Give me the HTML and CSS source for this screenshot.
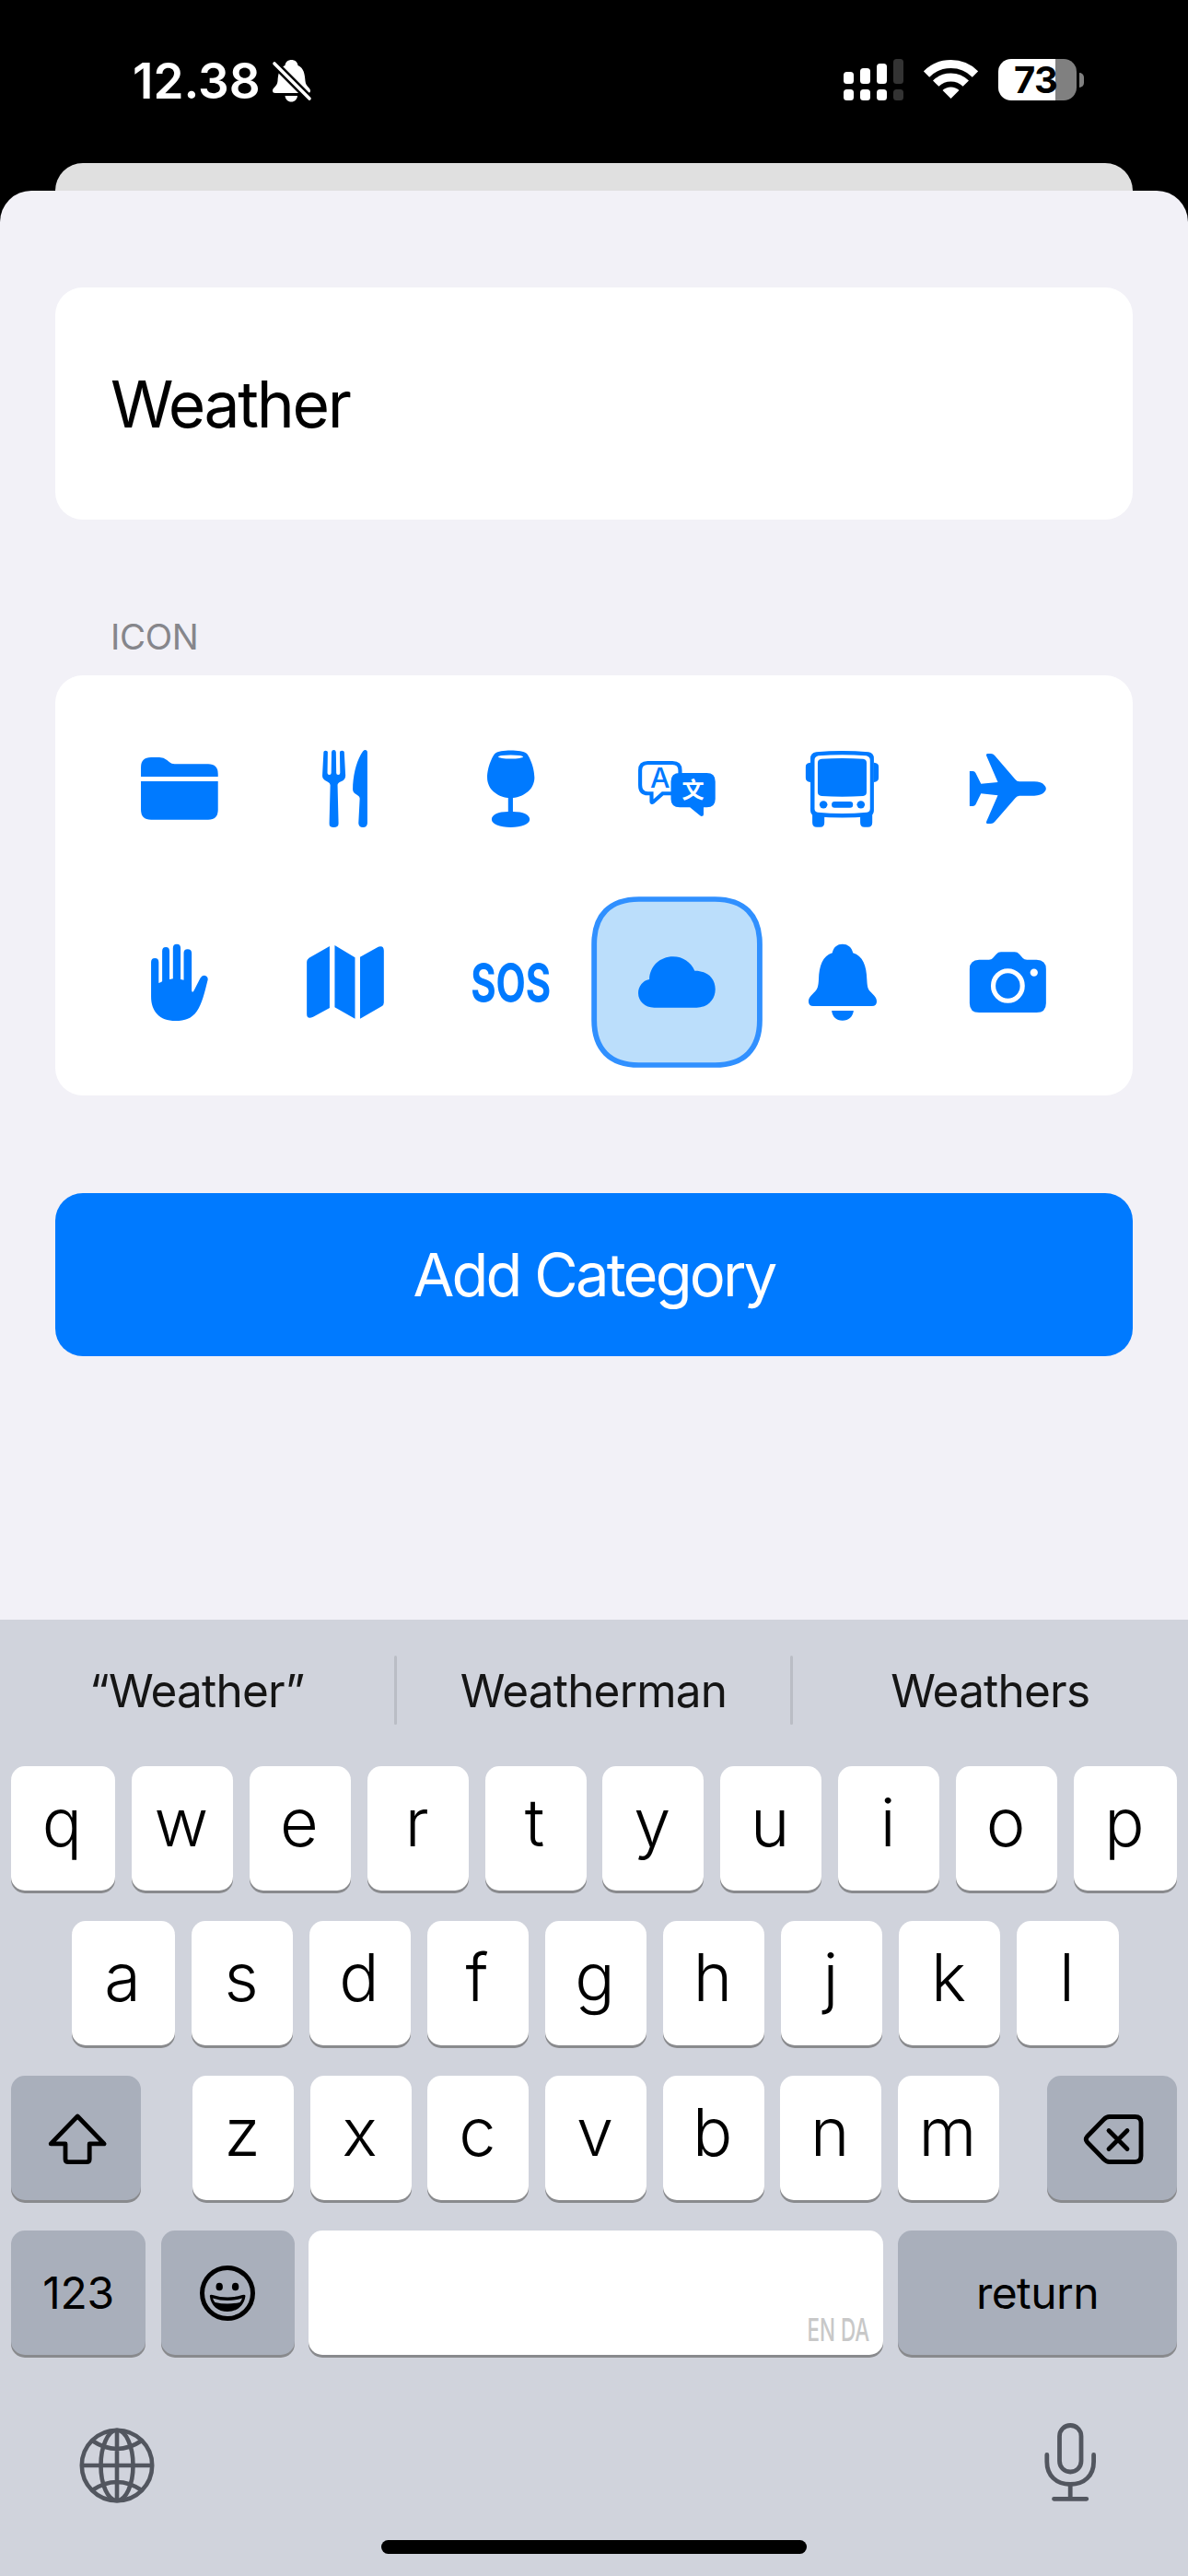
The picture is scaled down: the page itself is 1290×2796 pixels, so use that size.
FILE: index.html
```html
<!DOCTYPE html>
<html lang="en">
<head>
<meta charset="utf-8">
<title>Add Category</title>
<link rel="stylesheet" href="styles.css">
</head>
<body>
<div class="screen">
  <header class="status">
    <div class="status-left">
      <span class="clock">12.38</span>
      <svg class="mute" viewBox="294 62 46 50">
        <g fill="#fff"><path d="M309.500 71C310 67 313 65 316.500 65S323 67 323.500 71C330 73.500 331 81 331.500 88C332 94 337 95 337 98.500Q337 101 334 101H299Q296 101 296 98.500C296 95 301 94 301.500 88C302 81 303 73.500 309.500 71Z"/><path d="M309.500 104H323C322.500 108 320 110.500 316.300 110.500S310 108 309.500 104Z"/></g>
        <path d="M298 69L336 107" stroke="#000" stroke-width="8.500"/>
        <path d="M298 69L336 107" stroke="#fff" stroke-width="3.600" stroke-linecap="round"/>
      </svg>
    </div>
    <div class="status-right">
      <svg class="signal" viewBox="916 64 65 45">
        <g fill="#fff"><rect x="916" y="78" width="11" height="13" rx="3.500"/><rect x="934" y="74" width="11" height="17" rx="3.500"/><rect x="952" y="69" width="11" height="22" rx="3.500"/><rect x="916" y="97" width="11" height="12" rx="3.500"/><rect x="934" y="97" width="11" height="12" rx="3.500"/><rect x="952" y="97" width="11" height="12" rx="3.500"/></g>
        <g fill="#333"><rect x="970" y="64" width="11" height="27" rx="3.500"/><rect x="970" y="97" width="11" height="12" rx="3.500"/></g>
      </svg>
      <svg class="wifi" viewBox="1003 64 59 45">
        <g fill="none" stroke="#fff" stroke-width="9"><path d="M1006 80.500A37.500 37.500 0 0 1 1059 80.500"/><path d="M1016.200 90.700A23 23 0 0 1 1048.800 90.700"/></g>
        <path d="M1032.500 107L1023.500 98A13 13 0 0 1 1041.500 98Z" fill="#fff"/>
      </svg>
      <div class="battery"><div class="battery-cell">73</div><div class="battery-tip"></div></div>
    </div>
  </header>

  <div class="back-card"></div>
  <main class="sheet">
    <div class="name-field">Weather</div>
    <h2 class="section-title">ICON</h2>
    <div class="icon-grid">
      <svg viewBox="14.500 -42 522.700 540" preserveAspectRatio="none"><path d="M154 189V158Q154 126 186 126H212Q226 126 236 135L244 142Q250 148 260 148H366Q397 148 397 180V189ZM154 204H397V297Q397 329 366 329H186Q154 329 154 297Z"/></svg>
      <svg viewBox="537.200 -42 522.700 540" preserveAspectRatio="none"><path d="M730 109Q730 104 736.500 104Q743 104 743 109L742 177Q742 183 748 183Q754 183 754 177L755 109Q756 102 762 102Q768 102 769 109L770 177Q770 183 776 183Q782 183 782 177L781 109Q781 104 788 104Q795 104 795 109L799 186Q799 199 785 205Q774 210 774 216L777 341Q777 354 762 354Q747 354 748 341L751 216Q751 210 741 205Q726 198 726 186Z"/><path d="M868 110Q868 102 861 102Q855 102 847 118C832 145 822 190 822 230Q822 240 832 246Q844 253 844 260L840 340Q840 354 854 354Q868 354 868 340Z"/></svg>
      <svg viewBox="1060 -42 522.700 540" preserveAspectRatio="none"><path d="M1271 113C1285 100 1355 100 1370 113C1376 118 1395 155 1395 192C1395 228 1365 254 1327 258V303C1360 303 1380 313 1380 328C1380 344 1355 354 1320 354C1285 354 1260 344 1260 328C1260 313 1280 303 1312 303V258C1275 254 1246 228 1246 192C1246 155 1265 118 1271 113Z"/><ellipse class="cut" cx="1320" cy="124.500" rx="39" ry="6"/></svg>
      <svg viewBox="14.500 -42 522.700 540" preserveAspectRatio="none"><path d="M184 144H262Q286 144 286 168V244H231L200 272Q196 275 196 270V244H184Q160 244 160 216V168Q160 144 184 144Z" fill="#fff" stroke="#007aff" stroke-width="12"/><text class="glyph-a" x="223" y="224" text-anchor="middle">A</text><path d="M285 177H370Q397 177 397 205V262Q397 289 370 289H360V312Q360 318 353 318L349 316L317 289H285Q257 289 257 262V205Q257 177 285 177Z"/><text class="glyph-wen cut" x="327" y="259" text-anchor="middle">文</text></svg>
      <svg viewBox="537.200 -42 522.700 540" preserveAspectRatio="none"><path fill-rule="evenodd" d="M697 130Q697 112 715 109Q797 101 880 109Q897 112 897 130V300Q897 315 880 319Q797 326 715 319Q697 315 697 300ZM710 135Q710 124 722 121Q797 115 873 121Q885 124 885 135V293Q885 303 875 305Q797 313 720 305Q710 303 710 293Z"/><path d="M720 143Q720 133 732 131Q797 127 863 131Q874 133 874 143V240Q874 250 863 252Q797 257 732 252Q720 250 720 240ZM697 143Q682 144 682 156V193Q682 206 697 207ZM897 143Q912 144 912 156V193Q912 206 897 207ZM703 310V338Q703 353 717 353H728Q741 353 741 338V318ZM892 310V338Q892 353 878 353H867Q854 353 854 338V318Z"/><circle cx="738" cy="280" r="12.500"/><circle cx="856" cy="280" r="12.500"/><rect x="764" y="270" width="67" height="20" rx="9"/></svg>
      <svg viewBox="1060 -42 522.700 540" preserveAspectRatio="none"><path d="M1199 171H1209Q1215 171 1218 177L1235 212L1288 207L1252 121Q1250 114 1257 114H1266Q1273 114 1278 120L1343 198Q1348 205 1356 205H1403Q1425 205 1434 216Q1440 222 1440 228Q1440 234 1434 240Q1425 250 1403 251H1356Q1348 251 1343 259L1278 336Q1273 342 1266 342H1257Q1250 342 1252 335L1288 250L1235 244L1218 280Q1215 285 1209 285H1199Z"/></svg>

      <svg viewBox="14.500 588 522.700 540" preserveAspectRatio="none"><path d="M186 905V793Q186 780 198 780Q210 780 210 793V861Q216 860 221 856V757Q221 744 232.500 744Q244 744 244 757V849L255 847V747Q255 734 267 734Q279 734 279 747V849L289 851V763Q289 751 301 751Q314 751 314 764V885Q314 890 317 890Q319 890 321 886L341 845Q346 836 353 836Q366 838 365 850C355 890 347 930 330 953C314 976 293 984 263 984C212 984 186 952 186 905Z"/></svg>
      <svg viewBox="537.200 588 522.700 540" preserveAspectRatio="none"><path d="M677 792Q677 785 684 779L749 741V942L697 971Q677 980 677 962ZM765 738L829 778V977L765 940ZM845 776L897 746Q919 735 920 755V925Q920 933 913 937L845 977Z"/></svg>
      <svg viewBox="1060 588 522.700 540" preserveAspectRatio="none"><text class="glyph-sos" x="1194" y="920" textLength="253" lengthAdjust="spacingAndGlyphs">SOS</text></svg>
      <svg viewBox="14.500 588 522.700 540" preserveAspectRatio="none"><path class="selected" d="M156 588H396C487 588 537 640 537 734V982C537 1076 487 1128 396 1128H156C65 1128 15 1076 15 982V734C15 640 65 588 156 588Z"/><path d="M204 941C175 941 154 920 154 894C154 872 168 853 189 849C190 807 222 775 264 775C295 775 320 793 332 821C370 820 397 845 397 881C397 915 372 941 338 941Z"/></svg>
      <svg viewBox="537.200 588 522.700 540" preserveAspectRatio="none"><path d="M766 763C769 744 782 734 798 734C814 734 828 744 831 763C862 772 874 805 875 850C876 872 878 881 885 888C897 901 906 908 906 921Q906 936 891 936H706Q691 936 691 921C691 908 700 901 712 888C719 881 722 872 723 850C724 805 736 772 766 763ZM764 951H833C831 970 818 983 798 983C778 983 766 970 764 951Z"/></svg>
      <svg viewBox="1060 588 522.700 540" preserveAspectRatio="none"><path d="M1229 785H1260Q1268 785 1272 780L1283 767Q1289 760 1298 760H1341Q1350 760 1356 767L1367 780Q1371 785 1380 785H1410Q1440 786 1440 815V927Q1440 957 1410 957H1229Q1199 957 1199 927V815Q1199 786 1229 785Z"/><ellipse cx="1319.500" cy="870" rx="46" ry="49" fill="none" stroke="#fff" stroke-width="15"/><ellipse class="cut" cx="1402" cy="827" rx="12" ry="12.500"/></svg>
    </div>
    <div class="submit">Add Category</div>
  </main>

  <section class="keyboard">
    <div class="suggestions"><span>“Weather”</span><i></i><span>Weatherman</span><i></i><span>Weathers</span></div>
    <div class="row row-1"><b>q</b><b>w</b><b>e</b><b>r</b><b>t</b><b>y</b><b>u</b><b>i</b><b>o</b><b>p</b></div>
    <div class="row row-2"><b>a</b><b>s</b><b>d</b><b>f</b><b>g</b><b>h</b><b>j</b><b>k</b><b>l</b></div>
    <div class="row row-3">
      <b class="fn"><svg width="70" height="64" viewBox="47.500 2289 70 64"><path d="M83.700 2297L112.600 2326.900H96.700V2343.500Q96.700 2346.700 93.500 2346.700H73.700Q70.500 2346.700 70.500 2343.500V2326.900H54.700Z" fill="none" stroke="#000" stroke-width="4.800" stroke-linejoin="round"/></svg></b>
      <div class="letters"><b>z</b><b>x</b><b>c</b><b>v</b><b>b</b><b>n</b><b>m</b></div>
      <b class="fn"><svg width="70" height="64" viewBox="1172.500 2289 70 64"><g fill="none" stroke="#000" stroke-width="4.800" stroke-linecap="round" stroke-linejoin="round"><path d="M1204 2297.500H1232Q1238.500 2297.500 1238.500 2304V2340Q1238.500 2346.500 1232 2346.500H1204Q1201 2346.500 1198 2343.500L1180 2325Q1177.500 2322 1180 2319L1198 2300.500Q1201 2297.500 1204 2297.500Z"/><path d="M1203.500 2312.500L1223.500 2332.500M1223.500 2312.500L1203.500 2332.500"/></g></svg></b>
    </div>
    <div class="row row-4">
      <b class="fn num">123</b>
      <b class="fn emoji"><svg width="64" height="64" viewBox="215 2457 64 64"><circle cx="247" cy="2489" r="27.500" fill="none" stroke="#000" stroke-width="5"/><ellipse cx="238.200" cy="2482" rx="3.700" ry="4.300"/><ellipse cx="255.600" cy="2482" rx="3.700" ry="4.300"/><path d="M227.800 2492Q228 2490 231 2491Q247 2496 263 2491Q266.300 2490 266.500 2492C265 2503 257 2509 247 2509S229 2503 227.800 2492Z"/><path d="M231 2494.500Q247 2499.500 263 2494.500Q262 2497.500 260.500 2499Q247 2502 233.500 2499Q232 2497.500 231 2494.500Z" fill="#a9afbb"/></svg></b>
      <b class="space"><span>EN DA</span></b>
      <b class="fn return">return</b>
    </div>
    <div class="dock">
      <svg width="84" height="90" viewBox="85.500 2628 84 90"><g fill="none" stroke="#52565f" stroke-width="4.600"><circle cx="127.500" cy="2676" r="38.200"/><ellipse cx="127.500" cy="2676" rx="17.500" ry="38.200"/><path d="M127.500 2638V2714M89 2676H166M100.500 2649Q127.500 2667 154.500 2649M100.500 2703Q127.500 2685 154.500 2703"/></g></svg>
      <svg width="60" height="90" viewBox="1132 2628 60 90"><g fill="none" stroke="#52565f" stroke-width="4.800" stroke-linecap="round"><rect x="1150.500" y="2632.500" width="23.500" height="50.500" rx="11.700"/><path d="M1136.800 2664.500V2672C1136.800 2687 1147 2696.500 1162.200 2696.500S1187.600 2687 1187.600 2672V2664.500M1162.200 2697V2712M1144.500 2712.300H1179.800"/></g></svg>
    </div>
    <div class="home"></div>
  </section>
</div>
</body>
</html>
```
FILE: styles.css
```css
* { box-sizing: border-box; margin: 0; padding: 0; }
body { background: #000; font-family: Inter, "Liberation Sans", sans-serif; }
svg { display: block; }
.screen { width: 1290px; height: 2796px; display: flex; flex-direction: column; background: #000; }

.status { height: 177px; display: flex; justify-content: space-between; padding: 62px 113px 0 144px; }
.status-left, .status-right { display: flex; align-items: flex-start; }
.clock { color: #fff; font-size: 53px; font-weight: 600; line-height: 52px; letter-spacing: 0; width: 150px; white-space: nowrap; }
.mute { width: 46px; height: 50px; }
.status-right { padding-top: 2px; }
.signal { width: 65px; height: 45px; margin-right: 22px; }
.wifi { width: 59px; height: 45px; margin-right: 22px; }
.battery { display: flex; align-items: center; gap: 3px; }
.battery-cell { width: 85px; height: 45px; border-radius: 14px; background: linear-gradient(90deg, #fff 62px, #808080 62px); font-size: 40px; font-weight: 700; line-height: 45px; padding-left: 17px; letter-spacing: -.5px; color: #000; }
.battery-tip { width: 5px; height: 16px; border-radius: 0 8px 8px 0; background: #808080; }

.back-card { height: 30px; margin: 0 60px; background: #e0e0e0; border-radius: 30px 30px 0 0; }
.sheet { height: 1551px; background: #f2f1f7; border-radius: 34px 34px 0 0; padding: 105px 60px 0; }
.name-field { height: 252px; background: #fff; border-radius: 30px; padding: 3px 60px 0; line-height: 249px; font-size: 69.500px; letter-spacing: -2.300px; color: #000; }
.section-title { margin: 105px 0 0 60px; height: 64px; line-height: 44px; font-size: 38.500px; font-weight: 400; letter-spacing: -.4px; color: #86868b; }
.icon-grid { height: 456px; background: #fff; border-radius: 30px; padding: 33px 45px; display: grid; grid-template-columns: repeat(6, 180px); grid-auto-rows: 180px; row-gap: 30px; fill: #007aff; }
.icon-grid svg { width: 180px; height: 180px; overflow: visible; }
.icon-grid .cut { fill: #fff; }
.selected { fill: #bbdefb; stroke: #3090ff; stroke-width: 17px; }
.glyph-a { font-size: 88px; font-weight: 500; }
.glyph-wen { font-family: "Noto Sans CJK SC", sans-serif; font-size: 70px; font-weight: 700; }
.glyph-sos { font-size: 168px; font-weight: 700; }
.submit { margin-top: 106px; height: 177px; background: #007aff; border-radius: 30px; color: #fff; text-align: center; font-size: 65px; line-height: 178px; letter-spacing: -2.750px; }

.keyboard { height: 1038px; background: #d0d3dc; display: flex; flex-direction: column; }
.suggestions { height: 159px; display: flex; align-items: center; padding: 0 1px 6px 0; }
.suggestions span { flex: 1; text-align: center; font-size: 49.500px; line-height: 60px; color: #151515; letter-spacing: -.8px; }
.suggestions i { width: 3px; height: 75px; border-radius: 2px; background: #babdc5; }
.row { display: flex; justify-content: space-between; height: 135px; margin: 0 12px 33px; }
.row b { width: 110px; height: 135px; border-radius: 15px; background: #fff; box-shadow: 0 3px 0 #898a8d; display: flex; align-items: center; justify-content: center; padding: 0 2px 15px 0; font-size: 72px; font-weight: 340; color: #000; }
.row-1 b:first-child { width: 113px; }
.row-1 b:last-child { width: 112px; }
.row-2 { margin-left: 78px; margin-right: 75px; }
.row-2 b:first-child { width: 112px; }
.row-2 b:last-child { width: 111px; }
.letters { width: 876px; margin-left: 4px; display: flex; justify-content: space-between; }
.row .fn { width: 141px; background: #a9afbb; padding: 0; font-size: 48px; font-weight: 400; }
.row .num { width: 146px; letter-spacing: -.3px; }
.row .emoji { width: 145px; margin-left: 1px; }
.row .space { width: 624px; align-items: flex-end; justify-content: flex-end; padding: 0 15px 10px 0; }
.space span { font-size: 34.500px; line-height: 34px; font-weight: 500; color: #c8c8c8; transform: scaleX(.65); transform-origin: 100% 50%; white-space: nowrap; }
.row .return { width: 303px; letter-spacing: -.6px; }
.dock { display: flex; justify-content: space-between; padding: 39px 98px 0 85px; height: 168px; }
.home { width: 462px; height: 15px; border-radius: 8px; background: #000; margin: 0 auto; }
```
